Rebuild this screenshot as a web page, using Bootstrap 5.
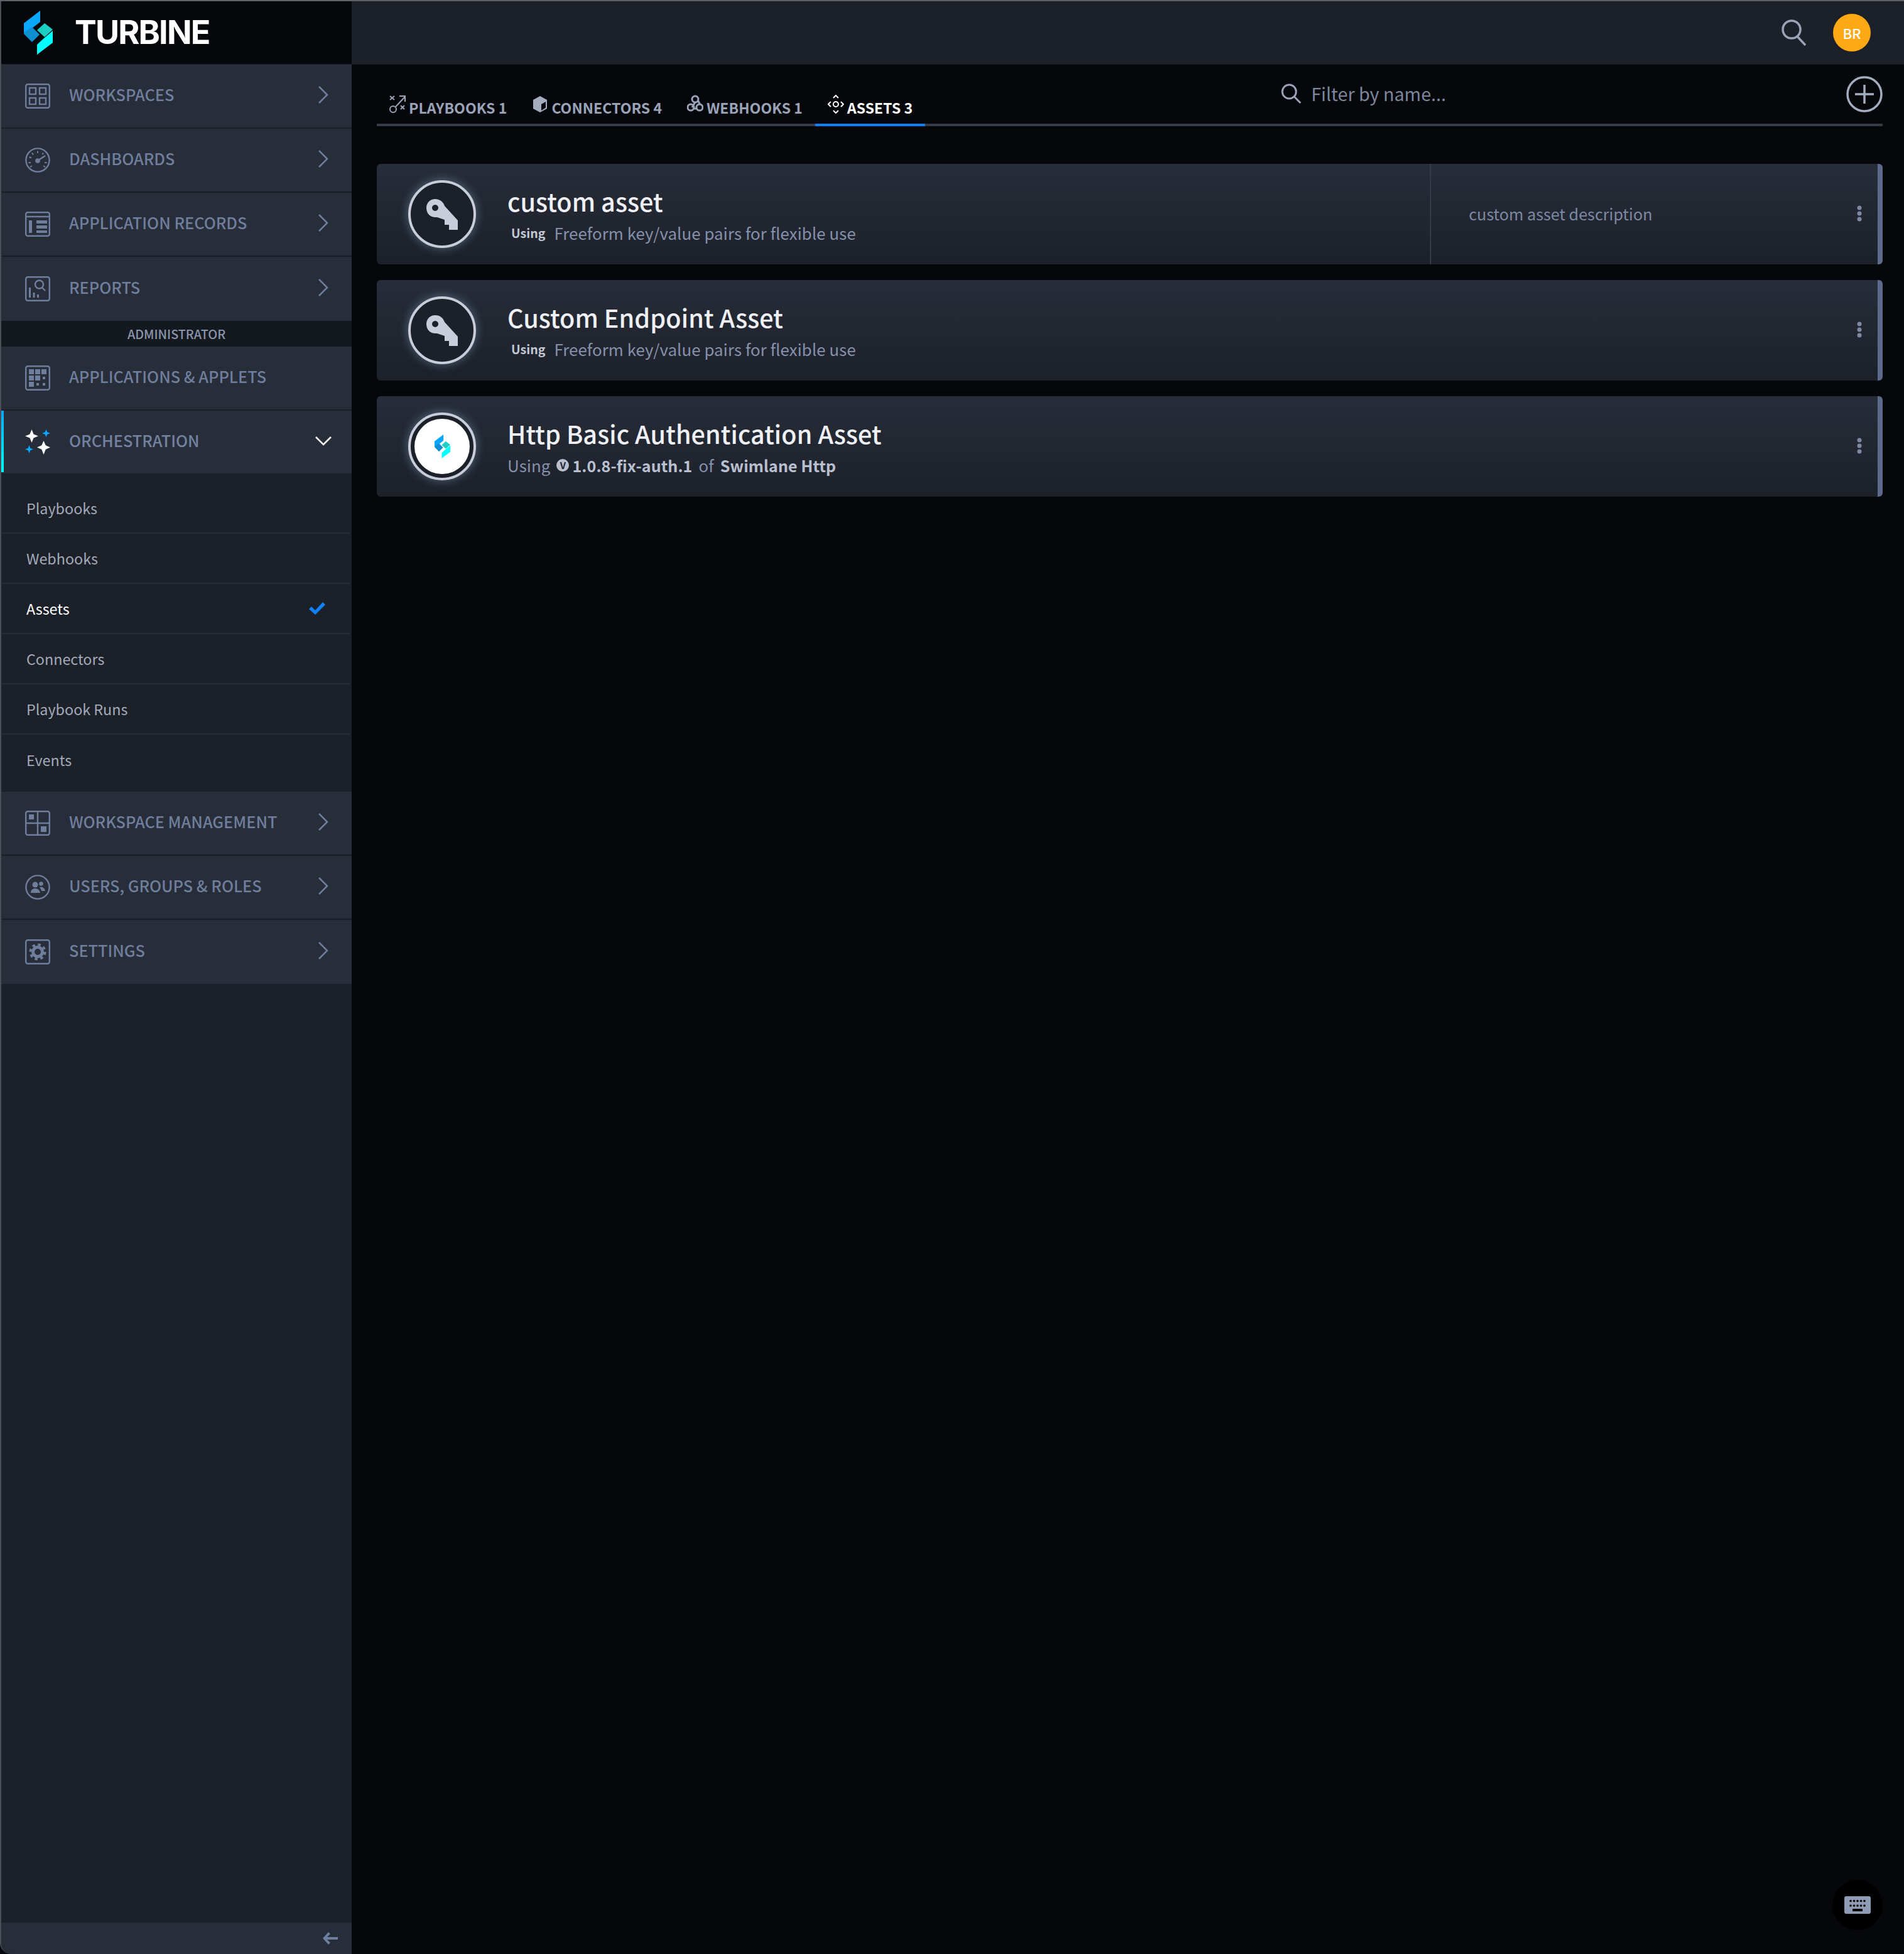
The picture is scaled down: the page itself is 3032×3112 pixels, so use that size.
<!DOCTYPE html>
<html lang="en">
<head>
    <meta charset="UTF-8">
    <title>Turbine - Assets</title>
    <link href="https://cdn.jsdelivr.net/npm/bootstrap@5.3.0/dist/css/bootstrap.min.css" rel="stylesheet">
    <style>
        html, body { height: 3112px; }
        body {
            font-family: "Noto Sans CJK SC", "Liberation Sans", sans-serif;
            background: #05070b;
            color: #fff;
            overflow: hidden;
            border-top: 2px solid #5f6167;
        }
        .app-shell { height: 3110px; }
        /* sidebar */
        .side-panel {
            width: 560px;
            background: #1c2029;
            border-left: 2px solid #4a4e57;
            border-bottom-left-radius: 18px;
        }
        .brand-band { height: 101px; background: #05070b; padding-left: 36px; gap: 35px; border-bottom: 1px solid #20242d; }
        .brand-name { font-family: Inter, sans-serif; font-weight: 700; font-size: 52px; letter-spacing: -1.8px; line-height: 1; }
        .menu-row {
            height: 102px;
            background: #272d39;
            border-bottom: 2px solid #1b1f27;
            padding-left: 38px;
            padding-right: 36px;
            color: #6f7e9d;
            font-size: 25.3px;
            font-weight: 500;
        }
        .menu-row.no-line { border-bottom: 0; }
        .menu-row.is-open { position: relative; color: #7382a0; }
        .menu-row.is-open::before {
            content: "";
            position: absolute;
            left: 0; top: 0; bottom: 2px;
            width: 4px;
            background: linear-gradient(#0aa7ff, #0ff);
        }
        .menu-label { margin: -4px 0 0 30px; line-height: 1; flex-grow: 1; }
        .menu-ico { width: 40px; height: 40px; flex: none; }
        .menu-chev { width: 18px; height: 30px; flex: none; margin-top: -5px; }
        .admin-band {
            height: 41px;
            background: #14181f;
            color: #8a94ab;
            font-size: 19.8px;
            font-weight: 500;
            line-height: 41px;
        }
        .sub-list { padding: 14px 0 11px; background: #1c2029; }
        .sub-item {
            height: 80px;
            padding: 0 40px;
            font-size: 23.3px;
            color: #a2a9b8;
            border-bottom: 2px solid #272c37;
            margin-right: 2px;
        }
        .sub-item:last-child { border-bottom: 0; }
        .sub-item.is-current { color: #fff; }
        .side-foot { height: 50px; background: #272d39; border-bottom-left-radius: 16px; padding-right: 22px; }
        /* top bar */
        .top-strip { height: 101px; background: #1c2129; padding-right: 53px; gap: 42px; border-bottom: 1px solid #15181f; }
        .user-dot {
            width: 60px; height: 60px;
            background: #fea815;
            font-size: 22px;
            font-weight: 500;
        }
        /* tabs and filter */
        .work-area { padding: 0 34px 0 40px; }
        .tab-rail { height: 98px; border-bottom: 4px solid #343a48; }
        .tab-link {
            height: 60px;
            padding: 4px 20px 0;
            margin-bottom: -4px;
            gap: 5px;
            color: #9aa3b8;
            font-size: 23.1px;
            font-weight: 700;
            border-bottom: 4px solid transparent;
            text-decoration: none;
        }
        .tab-link.is-on { color: #fff; border-bottom-color: #1080f5; }
        .tab-ico { width: 26px; height: 30px; flex: none; margin-top: -10px; }
        .filter-box { flex: 0 0 900px; margin-left: auto; margin-top: -2px; gap: 16px; }
        .filter-box input {
            background: transparent;
            border: 0;
            padding: 0;
            color: #fff;
            font-size: 28.7px;
            box-shadow: none;
        }
        .filter-box input::placeholder { color: #7d869c; opacity: 1; }
        /* asset cards */
        .asset-stack { margin-top: 60px; gap: 25px; }
        .asset-card {
            height: 160px;
            border: 0;
            border-right: 8px solid #5c6b8c;
            border-radius: 6px;
            background: linear-gradient(#272d39, #1c2029);
        }
        .asset-main { padding-left: 50px; gap: 50px; }
        .asset-ring {
            width: 108px; height: 108px;
            flex: none;
            border: 4px solid #c8cdd9;
            background: #1c2029;
            box-shadow: 0 0 14px 2px rgba(150, 185, 225, .35);
        }
        .asset-ring.is-white { padding: 6px; }
        .ring-fill { width: 100%; height: 100%; background: #fff; }
        .asset-copy { padding-top: 3px; }
        .asset-title { font-size: 39.7px; line-height: 48px; font-weight: 500; color: #eef0f5; }
        .asset-sub { font-size: 26px; line-height: 36px; color: #8590ab; margin-top: 9px; }
        .using-tag { font-size: 19.6px; font-weight: 700; color: #c2c8d5; margin: 0 14px 0 6px; }
        .asset-sub b { color: #b8bfcf; font-weight: 700; font-size: 25.2px; }
        .of-word { margin: 0 10px; }
        .ver-dot {
            width: 20px; height: 20px;
            background: #b8bfcf;
            color: #1f2430;
            font-size: 15px;
            font-weight: 700;
            margin: 0 5px 0 10px;
        }
        .asset-note {
            width: 713px;
            flex: none;
            border-left: 2px solid #343a48;
            padding-left: 60px;
            font-size: 25.2px;
            color: #7d88a3;
        }
        .kebab { width: 8px; height: 26px; flex: none; margin: -2px 25px 0 0; }
        .key-fab {
            position: absolute;
            right: 34px; bottom: 38px;
            width: 80px; height: 80px;
            background: #000;
        }
    </style>
</head>
<body>
<div class="app-shell d-flex">
    <aside class="side-panel d-flex flex-column flex-shrink-0">
        <div class="brand-band d-flex align-items-center flex-shrink-0">
            <svg width="46" height="70" viewBox="0 0 46 70">
                <path d="M26 0V18L13 28L0 37V20Z" fill="#0aa7ff"/>
                <path d="M0 35L13 26L25 38L13 50L0 37Z" fill="#0d8fd0"/>
                <path d="M33 20L46 30L33 42L21 31Z" fill="#1ccfc4"/>
                <path d="M46 32V51L21 70V54L33 43Z" fill="#0ff"/>
            </svg>
            <span class="brand-name">TURBINE</span>
        </div>

        <div class="menu-row d-flex align-items-center">
            <svg class="menu-ico" viewBox="0 0 40 40" fill="none" stroke="currentColor" stroke-width="2.4"><rect x="1.2" y="1.2" width="37.6" height="37.6" rx="3"/><rect x="7" y="7" width="10" height="10"/><rect x="23" y="7" width="10" height="10"/><rect x="7" y="23" width="10" height="10"/><rect x="23" y="23" width="10" height="10"/></svg>
            <span class="menu-label">WORKSPACES</span>
            <svg class="menu-chev" viewBox="0 0 18 30" fill="none" stroke="currentColor" stroke-width="2.6"><path d="M2 2L15 15L2 28"/></svg>
        </div>
        <div class="menu-row d-flex align-items-center">
            <svg class="menu-ico" viewBox="0 0 40 40" fill="none" stroke="currentColor" stroke-width="2.4"><circle cx="20" cy="20" r="18.6"/><path d="M20 5.5V9M11 8.5L13 11.500M6.500 15L10 16.500M5.500 24H9M8 31L11 29M29 8.500L27.500 11M34.500 24H31M32 31L29 29" stroke-width="2"/><path d="M20 21L32 13"/><circle cx="20" cy="21" r="2.600" fill="currentColor"/></svg>
            <span class="menu-label">DASHBOARDS</span>
            <svg class="menu-chev" viewBox="0 0 18 30" fill="none" stroke="currentColor" stroke-width="2.6"><path d="M2 2L15 15L2 28"/></svg>
        </div>
        <div class="menu-row d-flex align-items-center">
            <svg class="menu-ico" viewBox="0 0 40 40" fill="none" stroke="currentColor" stroke-width="2.4"><rect x="1.2" y="1.2" width="37.6" height="37.6" rx="3"/><path d="M1 8H39"/><rect x="6" y="14" width="5" height="20" fill="currentColor" stroke="none"/><rect x="18" y="14" width="17" height="5" fill="currentColor" stroke="none"/><rect x="18" y="22" width="17" height="5" fill="currentColor" stroke="none"/><rect x="18" y="30" width="17" height="4" fill="currentColor" stroke="none"/></svg>
            <span class="menu-label">APPLICATION RECORDS</span>
            <svg class="menu-chev" viewBox="0 0 18 30" fill="none" stroke="currentColor" stroke-width="2.6"><path d="M2 2L15 15L2 28"/></svg>
        </div>
        <div class="menu-row no-line d-flex align-items-center">
            <svg class="menu-ico" viewBox="0 0 40 40" fill="none" stroke="currentColor" stroke-width="2.4"><rect x="1.2" y="1.2" width="37.6" height="37.6" rx="3"/><circle cx="22.500" cy="13" r="6.500"/><path d="M27 18L32 23"/><path d="M7.500 34V18M14 34V26M20.500 34V29" stroke-width="3"/></svg>
            <span class="menu-label">REPORTS</span>
            <svg class="menu-chev" viewBox="0 0 18 30" fill="none" stroke="currentColor" stroke-width="2.6"><path d="M2 2L15 15L2 28"/></svg>
        </div>

        <div class="admin-band text-center flex-shrink-0">ADMINISTRATOR</div>

        <div class="menu-row d-flex align-items-center">
            <svg class="menu-ico" viewBox="0 0 40 40" fill="none" stroke="currentColor" stroke-width="2.4"><rect x="1.2" y="1.2" width="37.6" height="37.6" rx="3"/><path fill="currentColor" stroke="none" d="M6 6h8v8H6zM16 6h8v8h-8zM26 6h8v8h-8zM6 16h8v8H6zM16 16h8v8h-8zM28 18h4v4h-4zM6 26h8v8H6zM18 28h4v4h-4zM28 28h4v4h-4z"/></svg>
            <span class="menu-label">APPLICATIONS &amp; APPLETS</span>
        </div>
        <div class="menu-row is-open d-flex align-items-center">
            <svg class="menu-ico" viewBox="0 0 40 40"><path fill="#fff" d="M10.500 0L13.500 7.500L21 10.500L13.500 13.500L10.500 21L7.500 13.500L0 10.500L7.500 7.500Z"/><path fill="#fff" d="M29.500 18L32.700 25.300L40 28.500L32.700 31.700L29.500 40L26.300 31.700L19 28.500L26.300 25.300Z"/><path fill="#0aa7ff" d="M33.500 0L35.300 4.200L40 6L35.300 7.800L33.500 12L31.700 7.800L27 6L31.700 4.200Z"/><path fill="#0aa7ff" d="M6.500 25L8.300 29.700L13 31.500L8.300 33.300L6.500 38L4.700 33.300L0 31.500L4.700 29.700Z"/></svg>
            <span class="menu-label">ORCHESTRATION</span>
            <svg width="26" height="16" viewBox="0 0 26 16" fill="none" stroke="#fff" stroke-width="2.6" class="flex-shrink-0" style="margin:-4px -4px 0 0"><path d="M1 2L13 14L25 2"/></svg>
        </div>

        <div class="sub-list flex-shrink-0">
            <div class="sub-item d-flex align-items-center">Playbooks</div>
            <div class="sub-item d-flex align-items-center">Webhooks</div>
            <div class="sub-item is-current d-flex align-items-center justify-content-between">Assets
                <svg width="26" height="20" viewBox="0 0 26 20"><path d="M0 11L4 7L10 13L22 0L26 4L10 20Z" fill="#1080f5"/></svg>
            </div>
            <div class="sub-item d-flex align-items-center">Connectors</div>
            <div class="sub-item d-flex align-items-center">Playbook Runs</div>
            <div class="sub-item d-flex align-items-center">Events</div>
        </div>

        <div class="menu-row d-flex align-items-center">
            <svg class="menu-ico" viewBox="0 0 40 40" fill="none" stroke="currentColor" stroke-width="2.4"><rect x="1.2" y="1.2" width="37.6" height="37.6" rx="3"/><path d="M1 20H39M20 1V39"/><rect x="6" y="6" width="8" height="8" fill="currentColor" stroke="none"/><rect x="25" y="25" width="9" height="9" fill="currentColor" stroke="none"/></svg>
            <span class="menu-label">WORKSPACE MANAGEMENT</span>
            <svg class="menu-chev" viewBox="0 0 18 30" fill="none" stroke="currentColor" stroke-width="2.6"><path d="M2 2L15 15L2 28"/></svg>
        </div>
        <div class="menu-row d-flex align-items-center">
            <svg class="menu-ico" viewBox="0 0 40 40" fill="none" stroke="currentColor" stroke-width="2.4"><circle cx="20" cy="20" r="18.600"/><g fill="currentColor" stroke="none"><circle cx="16" cy="16" r="4.500"/><circle cx="25.500" cy="14.500" r="3.300"/><path d="M9 29C9 24 12 22 16 22C20 22 23 24 24 29Z"/><path d="M23 20C26 19 31 20 32 26H26C25.500 23.500 24.500 22 23 20Z"/></g></svg>
            <span class="menu-label">USERS, GROUPS &amp; ROLES</span>
            <svg class="menu-chev" viewBox="0 0 18 30" fill="none" stroke="currentColor" stroke-width="2.6"><path d="M2 2L15 15L2 28"/></svg>
        </div>
        <div class="menu-row no-line d-flex align-items-center">
            <svg class="menu-ico" viewBox="0 0 40 40" fill="none" stroke="currentColor" stroke-width="2.4"><rect x="1.2" y="1.2" width="37.6" height="37.6" rx="3"/><circle cx="20" cy="20" r="7.500" stroke-width="5"/><circle cx="20" cy="20" r="11.500" stroke-width="4" stroke-dasharray="4.500 4.530"/></svg>
            <span class="menu-label">SETTINGS</span>
            <svg class="menu-chev" viewBox="0 0 18 30" fill="none" stroke="currentColor" stroke-width="2.6"><path d="M2 2L15 15L2 28"/></svg>
        </div>

        <div class="flex-grow-1"></div>
        <div class="side-foot d-flex align-items-center justify-content-end flex-shrink-0">
            <svg width="24" height="20" viewBox="0 0 24 20"><path d="M9 0L12 3L7 8H24V12H7L12 17L9 20L0 10Z" fill="#6c7da0"/></svg>
        </div>
    </aside>

    <main class="flex-grow-1 d-flex flex-column position-relative">
        <div class="top-strip d-flex align-items-center justify-content-end flex-shrink-0">
            <svg width="40" height="42" viewBox="0 0 40 42" fill="none" stroke="#9aa3b8" stroke-width="3.500"><circle cx="16" cy="16" r="14"/><path d="M25 27L38 41"/></svg>
            <div class="user-dot rounded-circle d-flex align-items-center justify-content-center">BR</div>
        </div>

        <div class="work-area flex-grow-1">
            <div class="tab-rail d-flex align-items-end">
                <a class="tab-link d-flex align-items-center" href="#">
                    <svg class="tab-ico" viewBox="0 0 26 30" fill="none" stroke="#9aa3b8" stroke-width="2"><path d="M1 2L8 8M8 2L1 8M18 17L24 23M24 17L18 23"/><circle cx="6" cy="23" r="5"/><path d="M10 19L25 3M16 2H25V11"/></svg>
                    PLAYBOOKS 1
                </a>
                <a class="tab-link d-flex align-items-center" href="#">
                    <svg class="tab-ico" viewBox="0 0 26 30"><path fill="#a4adc0" d="M13 2L24 8V22L13 28L2 22V8Z"/><path fill="#05070b" d="M15 15L22 11V20.500L15 25Z"/></svg>
                    CONNECTORS 4
                </a>
                <a class="tab-link d-flex align-items-center" href="#">
                    <svg class="tab-ico" viewBox="0 0 26 30" fill="none" stroke="#9aa3b8" stroke-width="3"><circle cx="13" cy="7" r="5"/><circle cx="6" cy="20" r="5"/><circle cx="20" cy="20" r="5"/><path d="M13 12L8 20M10 22H17M17 8L21 16"/></svg>
                    WEBHOOKS 1
                </a>
                <a class="tab-link is-on d-flex align-items-center" href="#">
                    <svg class="tab-ico" viewBox="0 0 26 30" fill="none" stroke="#fff" stroke-width="2"><circle cx="13" cy="15" r="4"/><path d="M9 5L13 1L17 5M9 25L13 29L17 25M5 11L1 15L5 19M21 11L25 15L21 19"/></svg>
                    ASSETS 3
                </a>
                <div class="filter-box d-flex align-items-center align-self-center">
                    <svg width="32" height="32" viewBox="0 0 32 32" fill="none" stroke="#9aa3b8" stroke-width="3" class="flex-shrink-0"><circle cx="13" cy="13" r="11"/><path d="M21 21L31 31"/></svg>
                    <input class="form-control" type="text" placeholder="Filter by name...">
                </div>
                <svg class="align-self-center flex-shrink-0" width="58" height="58" viewBox="0 0 58 58" fill="none" stroke="#a4adc0" stroke-width="3.500"><circle cx="29" cy="29" r="27"/><path d="M29 14V44M14 29H44"/></svg>
            </div>

            <div class="asset-stack d-flex flex-column">
                <div class="card asset-card d-flex flex-row align-items-stretch">
                    <div class="asset-main d-flex align-items-center flex-grow-1">
                        <div class="asset-ring rounded-circle d-flex align-items-center justify-content-center">
                            <svg width="50" height="49" viewBox="0 0 50 49"><path fill="#c8cdd9" fill-rule="evenodd" d="M14 0C22 0 27 5 29 11L50 34V49H36V41H29V33L17 29C7 30 0 24 0 14C0 6 6 0 14 0ZM14 9a5 5 0 1 0 0.01 0Z"/></svg>
                        </div>
                        <div class="asset-copy">
                            <div class="asset-title">custom asset</div>
                            <div class="asset-sub d-flex align-items-center"><span class="using-tag">Using</span>Freeform key/value pairs for flexible use</div>
                        </div>
                    </div>
                    <div class="asset-note d-flex align-items-center justify-content-between">
                        custom asset description
                        <svg class="kebab" viewBox="0 0 8 26" fill="#7d88a3"><circle cx="4" cy="4" r="3.500"/><circle cx="4" cy="13" r="3.500"/><circle cx="4" cy="22" r="3.500"/></svg>
                    </div>
                </div>

                <div class="card asset-card d-flex flex-row align-items-center">
                    <div class="asset-main d-flex align-items-center flex-grow-1">
                        <div class="asset-ring rounded-circle d-flex align-items-center justify-content-center">
                            <svg width="50" height="49" viewBox="0 0 50 49"><path fill="#c8cdd9" fill-rule="evenodd" d="M14 0C22 0 27 5 29 11L50 34V49H36V41H29V33L17 29C7 30 0 24 0 14C0 6 6 0 14 0ZM14 9a5 5 0 1 0 0.01 0Z"/></svg>
                        </div>
                        <div class="asset-copy">
                            <div class="asset-title">Custom Endpoint Asset</div>
                            <div class="asset-sub d-flex align-items-center"><span class="using-tag">Using</span>Freeform key/value pairs for flexible use</div>
                        </div>
                    </div>
                    <svg class="kebab" viewBox="0 0 8 26" fill="#7d88a3"><circle cx="4" cy="4" r="3.500"/><circle cx="4" cy="13" r="3.500"/><circle cx="4" cy="22" r="3.500"/></svg>
                </div>

                <div class="card asset-card d-flex flex-row align-items-center">
                    <div class="asset-main d-flex align-items-center flex-grow-1">
                        <div class="asset-ring is-white rounded-circle">
                            <div class="ring-fill rounded-circle d-flex align-items-center justify-content-center">
                                <svg width="25" height="38" viewBox="0 0 46 70">
                                    <path d="M26 0V18L13 28L0 37V20Z" fill="#0aa7ff"/>
                                    <path d="M0 35L13 26L25 38L13 50L0 37Z" fill="#0d8fd0"/>
                                    <path d="M33 20L46 30L33 42L21 31Z" fill="#1ccfc4"/>
                                    <path d="M46 32V51L21 70V54L33 43Z" fill="#0ff"/>
                                </svg>
                            </div>
                        </div>
                        <div class="asset-copy">
                            <div class="asset-title">Http Basic Authentication Asset</div>
                            <div class="asset-sub d-flex align-items-center">Using<span class="ver-dot rounded-circle d-flex align-items-center justify-content-center">V</span><b>1.0.8-fix-auth.1</b><span class="of-word">of</span><b>Swimlane Http</b></div>
                        </div>
                    </div>
                    <svg class="kebab" viewBox="0 0 8 26" fill="#7d88a3"><circle cx="4" cy="4" r="3.500"/><circle cx="4" cy="13" r="3.500"/><circle cx="4" cy="22" r="3.500"/></svg>
                </div>
            </div>
        </div>

        <div class="key-fab rounded-circle d-flex align-items-center justify-content-center">
            <svg width="42" height="28" viewBox="0 0 42 28"><rect width="42" height="28" rx="3" fill="#8f9bb5"/><g fill="#000"><circle cx="10" cy="7.500" r="1.800"/><circle cx="15.500" cy="7.500" r="1.800"/><circle cx="21" cy="7.500" r="1.800"/><circle cx="26.500" cy="7.500" r="1.800"/><circle cx="32" cy="7.500" r="1.800"/><circle cx="10" cy="15" r="1.800"/><circle cx="15.500" cy="15" r="1.800"/><circle cx="21" cy="15" r="1.800"/><circle cx="26.500" cy="15" r="1.800"/><circle cx="32" cy="15" r="1.800"/><rect x="13" y="20" width="16" height="4"/></g></svg>
        </div>
    </main>
</div>
<script src="https://cdn.jsdelivr.net/npm/bootstrap@5.3.0/dist/js/bootstrap.bundle.min.js"></script>
</body>
</html>
